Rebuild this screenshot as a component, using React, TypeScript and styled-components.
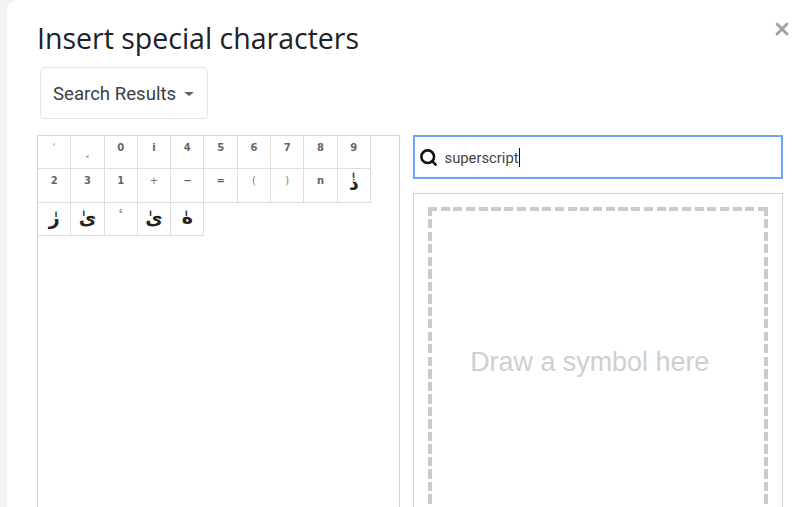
import styled, { createGlobalStyle } from "styled-components";
import { Search, X } from "lucide-react";

const GlobalStyle = createGlobalStyle`
  html, body {
    margin: 0;
    height: 100%;
    background: #f3f3f3;
    overflow: hidden;
  }
  #root {
    height: 100%;
  }
`;

const Dialog = styled.div`
  position: relative;
  box-sizing: border-box;
  height: 507px;
  margin-left: 7px;
  padding: 18px 17px 0 30px;
  background: #fff;
  border-top-left-radius: 10px;
  overflow: hidden;
`;

const Title = styled.h1`
  margin: 0;
  font-family: "Open Sans", sans-serif;
  font-size: 28.5px;
  font-weight: 400;
  line-height: 40px;
  color: #202124;
`;

const CloseButton = styled.button`
  position: absolute;
  top: 19px;
  right: 8px;
  padding: 0;
  border: 0;
  background: none;
  color: #a3a3a3;
  display: flex;
`;

const Dropdown = styled.div`
  box-sizing: border-box;
  display: flex;
  align-items: center;
  width: 168px;
  height: 52px;
  margin: 9px 0 16px 3px;
  padding: 2px 0 0 12px;
  border: 1px solid #e3e3e6;
  border-radius: 5px;
  font-family: Roboto, sans-serif;
  font-size: 18.6px;
  color: #3c4043;
`;

const Caret = styled.span`
  margin-left: 8px;
  border-left: 5px solid transparent;
  border-right: 5px solid transparent;
  border-top: 4px solid #5f6368;
`;

const Columns = styled.div`
  display: flex;
  gap: 13px;
`;

const GridPanel = styled.div`
  box-sizing: border-box;
  width: 363px;
  height: 400px;
  border: 1px solid #d6d6d6;
  border-bottom: 0;
`;

const Grid = styled.div`
  display: grid;
  grid-template-columns: repeat(10, 33.3px);
  grid-auto-rows: 33.4px;
`;

type CellKind = "digit" | "light" | "low" | "mark" | "arabic";

const Cell = styled.div<{ $kind: CellKind }>`
  box-sizing: border-box;
  display: flex;
  justify-content: center;
  align-items: ${(p) => (p.$kind === "low" ? "flex-end" : "flex-start")};
  padding: ${(p) =>
    p.$kind === "arabic" ? "1px 0 3px" : p.$kind === "low" ? "0" : p.$kind === "mark" ? "0" : "5px 0 4px"};
  border-right: 1px solid #dedede;
  border-bottom: 1px solid #dedede;
  font-family: "DejaVu Sans", sans-serif;
  font-size: ${(p) => (p.$kind === "arabic" ? "19px" : p.$kind === "mark" ? "9px" : "10px")};
  font-weight: ${(p) => (p.$kind === "digit" || p.$kind === "arabic" ? 700 : 400)};
  line-height: ${(p) => (p.$kind === "arabic" ? "26px" : "14px")};
  color: ${(p) => (p.$kind === "arabic" ? "#222" : p.$kind === "digit" ? "#666" : "#777")};
`;

const RightColumn = styled.div`
  display: flex;
  flex-direction: column;
  gap: 14px;
  width: 371px;
`;

const SearchBox = styled.div`
  box-sizing: border-box;
  display: flex;
  align-items: center;
  gap: 7px;
  height: 44px;
  padding-left: 4px;
  border: 2px solid #6ea6f7;
  font-family: Roboto, sans-serif;
  font-size: 14.8px;
  color: #444;
`;

const TextCaret = styled.span`
  display: inline-block;
  width: 1px;
  height: 19px;
  background: #111;
  vertical-align: -4px;
`;

const DrawPanel = styled.div`
  box-sizing: border-box;
  height: 340px;
  padding: 13px 14px 0;
  border: 1px solid #d2d2d2;
`;

const DrawArea = styled.div`
  display: flex;
  justify-content: center;
  box-sizing: border-box;
  height: 330px;
  padding: 140px 16px 0 0;
  font-family: "Liberation Sans", sans-serif;
  font-size: 26.9px;
  line-height: 30px;
  color: #cfcfcf;
  background:
    repeating-linear-gradient(90deg, #cbcbcb 0 9px, transparent 9px 12.7px) top / 100% 4px no-repeat,
    repeating-linear-gradient(180deg, #cbcbcb 0 9px, transparent 9px 12.5px) left / 4px 100% no-repeat,
    repeating-linear-gradient(180deg, #cbcbcb 0 9px, transparent 9px 12.5px) right / 4px 100% no-repeat;
`;

const cells: { ch: string; kind: CellKind }[] = [
  { ch: "ˈ", kind: "light" },
  { ch: "˂", kind: "low" },
  { ch: "0", kind: "digit" },
  { ch: "i", kind: "digit" },
  { ch: "4", kind: "digit" },
  { ch: "5", kind: "digit" },
  { ch: "6", kind: "digit" },
  { ch: "7", kind: "digit" },
  { ch: "8", kind: "digit" },
  { ch: "9", kind: "digit" },
  { ch: "2", kind: "digit" },
  { ch: "3", kind: "digit" },
  { ch: "1", kind: "digit" },
  { ch: "+", kind: "light" },
  { ch: "−", kind: "digit" },
  { ch: "=", kind: "digit" },
  { ch: "(", kind: "light" },
  { ch: ")", kind: "light" },
  { ch: "n", kind: "digit" },
  { ch: "ذٰ", kind: "arabic" },
  { ch: "رٰ", kind: "arabic" },
  { ch: "ىٰ", kind: "arabic" },
  { ch: "ء", kind: "mark" },
  { ch: "ىٰ", kind: "arabic" },
  { ch: "هٰ", kind: "arabic" },
];

export default function App() {
  return (
    <>
      <GlobalStyle />
      <Dialog>
        <Title>Insert special characters</Title>
        <CloseButton>
          <X size={20} strokeWidth={3.5} />
        </CloseButton>
        <Dropdown>
          Search Results
          <Caret />
        </Dropdown>
        <Columns>
          <GridPanel>
            <Grid>
              {cells.map((cell, i) => (
                <Cell key={i} $kind={cell.kind}>
                  {cell.ch}
                </Cell>
              ))}
            </Grid>
          </GridPanel>
          <RightColumn>
            <SearchBox>
              <Search size={19} strokeWidth={3.2} color="#111" />
              <span>
                superscript
                <TextCaret />
              </span>
            </SearchBox>
            <DrawPanel>
              <DrawArea>Draw a symbol here</DrawArea>
            </DrawPanel>
          </RightColumn>
        </Columns>
      </Dialog>
    </>
  );
}
